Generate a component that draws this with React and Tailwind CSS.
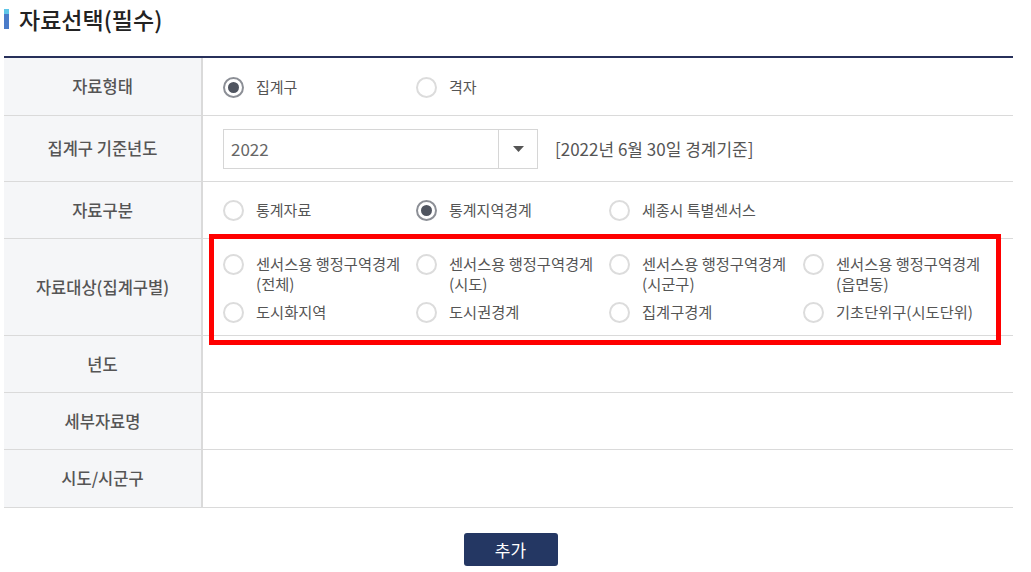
import React from "react";

const font = { fontFamily: '"Noto Sans CJK KR", "Noto Sans", sans-serif' };

const Radio = ({ checked }) => (
  <span
    className={
      "mt-[1px] inline-flex h-[21px] w-[21px] shrink-0 items-center justify-center rounded-full border-2 bg-white " +
      (checked ? "border-[#8c8f96]" : "border-[#dcdcdc]")
    }
  >
    {checked && <span className="h-[11px] w-[11px] rounded-full bg-[#505560]" />}
  </span>
);

const Option = ({ label, checked }) => (
  <label className="flex w-[193px] items-start gap-[12px]">
    <Radio checked={checked} />
    <span className="text-[15px] leading-[21px] text-[#555]">{label}</span>
  </label>
);

const Row = ({ title, h, children }) => (
  <div className={"flex border-b border-[#dadada] " + h}>
    <div className="flex w-[199px] shrink-0 items-center justify-center border-r-2 border-[#dadada] bg-[#f5f6f8] text-[16.5px] font-medium text-[#555]">
      {title}
    </div>
    <div className="flex flex-1 items-center pl-[20px]">{children}</div>
  </div>
);

const targets = [
  ["센서스용 행정구역경계", "(전체)"],
  ["센서스용 행정구역경계", "(시도)"],
  ["센서스용 행정구역경계", "(시군구)"],
  ["센서스용 행정구역경계", "(읍면동)"],
  ["도시화지역"],
  ["도시권경계"],
  ["집계구경계"],
  ["기초단위구(시도단위)"],
];

export default function App() {
  return (
    <div className="h-[572px] w-[1031px] bg-white px-[4px] pt-[5px]" style={font}>
      <div className="flex items-center gap-[10px]">
        <div className="flex h-[20px] w-[5px] flex-col">
          <div className="h-[5px] bg-[#5ec6e8]" />
          <div className="flex-1 bg-[#4a7cc9]" />
        </div>
        <h2 className="text-[23px] font-medium leading-[28px] text-[#222]">자료선택(필수)</h2>
      </div>

      <div className="relative mt-[23px] w-[1009px] border-t-2 border-[#27305a]">
        <Row title="자료형태" h="h-[58px]">
          <Option label="집계구" checked />
          <Option label="격자" />
        </Row>
        <Row title="집계구 기준년도" h="h-[66px]">
          <div className="flex h-[40px] w-[315px] border border-[#d6d6d6]">
            <div className="flex flex-1 items-center pl-[7px] text-[17px] text-[#666]">2022</div>
            <div className="flex w-[39px] items-center justify-center border-l border-[#d6d6d6]">
              <svg width="11" height="6" viewBox="0 0 11 6">
                <path d="M0 0h11L5.5 6z" fill="#555" />
              </svg>
            </div>
          </div>
          <span className="ml-[17px] text-[17px] text-[#555]">[2022년 6월 30일 경계기준]</span>
        </Row>
        <Row title="자료구분" h="h-[57px]">
          <Option label="통계자료" />
          <Option label="통계지역경계" checked />
          <Option label="세종시 특별센서스" />
        </Row>
        <Row title="자료대상(집계구별)" h="h-[97px]">
          <div className="grid grid-cols-[193px_193px_194px_200px] gap-y-[8px] pt-[1px]">
            {targets.map((t, i) => (
              <label key={i} className="flex items-start gap-[12px]">
                <Radio />
                <span className="text-[15.3px] leading-[20px] text-[#555]">
                  {t[0]}
                  {t[1] && <br />}
                  {t[1]}
                </span>
              </label>
            ))}
          </div>
        </Row>
        <Row title="년도" h="h-[57px]" />
        <Row title="세부자료명" h="h-[57px]" />
        <Row title="시도/시군구" h="h-[58px]" />

        <div className="pointer-events-none absolute left-[205px] top-[176px] h-[111px] w-[792px] border-[5px] border-[#ff0000]" />
      </div>

      <div className="mt-[25px] flex justify-center pr-[10px]">
        <button className="h-[33px] w-[94px] rounded-[3px] bg-[#243763] text-[17px] text-white">추가</button>
      </div>
    </div>
  );
}
